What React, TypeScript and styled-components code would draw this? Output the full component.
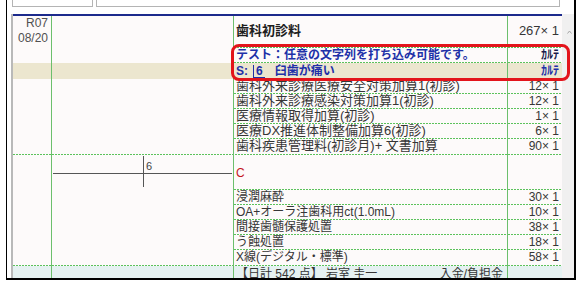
import React from 'react';
import styled, { createGlobalStyle, css } from 'styled-components';

const GREEN = '#6cbf6c';
const DOT = '#5cc25c';
const BLUE = '#2030a8';

const GlobalStyle = createGlobalStyle`
  body {
    margin: 0;
    background: #ffffff;
    font-family: "Liberation Sans", "Noto Sans CJK JP", sans-serif;
  }
`;

// green dotted rule along the bottom of a row / cell
const dots = css`
  background-image: repeating-linear-gradient(to right, ${DOT} 0 2px, transparent 2px 3px);
  background-size: 100% 1px;
  background-position: left bottom;
  background-repeat: no-repeat;
`;

const Page = styled.div`
  position: relative;
  width: 582px;
  height: 285px;
  overflow: hidden;
`;

const Frame = styled.div`
  margin-left: 6px;
  width: 570px;
  height: 280px;
  box-sizing: border-box;
  border-left: 1px solid #000;
  border-right: 2px solid #000;
  border-bottom: 2px solid #000;
  display: flex;
  flex-direction: column;
  overflow: hidden;
`;

const TopStrip = styled.div`
  height: 14px;
  display: flex;
  gap: 3px;
  padding-left: 5px;
  padding-right: 14px;
`;

const TopBox = styled.div<{ $w?: number }>`
  height: 7px;
  box-sizing: border-box;
  border: 1px solid #b4b4b4;
  border-top: none;
  background: #fff;
  ${(p) => (p.$w ? `width: ${p.$w}px;` : 'flex: 1;')}
`;

const Body = styled.div`
  flex: 1;
  display: flex;
  min-height: 0;
`;

const Gutter = styled.div`
  width: 6px;
  box-sizing: border-box;
  border-right: 2px solid #b9b9b9;
`;

const Main = styled.div`
  width: 549px;
  display: flex;
  flex-direction: column;
  background: #fdfafa;
  overflow: hidden;
`;

const NavyLine = styled.div`
  height: 2px;
  background: #1c2a8c;
  flex-shrink: 0;
`;

const Scroll = styled.div`
  width: 12px;
  background: #f0f0f0;
  padding: 6px 0 0 5px;
  box-sizing: border-box;
`;

const Row = styled.div<{ $h: number; $bg?: string; $full?: boolean }>`
  display: grid;
  grid-template-columns: 39px 182px 274px 54px;
  height: ${(p) => p.$h}px;
  flex-shrink: 0;
  background-color: ${(p) => p.$bg || 'transparent'};
  ${(p) => p.$full && dots}
`;

const Cell = styled.div`
  box-sizing: border-box;
  border-right: 1px solid ${GREEN};
`;

const DateCell = styled(Cell)`
  text-align: right;
  padding-right: 3px;
  font-size: 12px;
  line-height: 15px;
  color: #505050;
`;

const ToothCell = styled(Cell)`
  position: relative;
`;

const TextCell = styled(Cell)<{
  $line?: boolean;
  $color?: string;
  $bold?: boolean;
  $top?: number;
  $size?: number;
}>`
  padding-left: 2px;
  padding-top: ${(p) => p.$top || 0}px;
  font-size: ${(p) => p.$size || 12}px;
  line-height: 14px;
  white-space: nowrap;
  color: ${(p) => p.$color || '#363636'};
  font-weight: ${(p) => (p.$bold ? 700 : 400)};
  ${(p) => p.$line && dots}
`;

const QtyCell = styled.div<{ $line?: boolean; $color?: string; $bold?: boolean; $top?: number; $size?: number }>`
  box-sizing: border-box;
  text-align: right;
  padding-right: 3px;
  padding-top: ${(p) => p.$top || 0}px;
  font-size: ${(p) => p.$size || 12}px;
  line-height: 14px;
  white-space: nowrap;
  color: ${(p) => p.$color || '#363636'};
  font-weight: ${(p) => (p.$bold ? 700 : 400)};
  ${(p) => p.$line && dots}
`;

const HeadText = styled.span`
  font-size: 13px;
  font-weight: 700;
  color: #1e1e1e;
`;

const CMark = styled.div`
  height: 100%;
  display: flex;
  align-items: center;
  font-size: 12px;
  color: #c4161c;
`;

const ToothNo = styled.span`
  display: inline-block;
  border-left: 1px solid ${BLUE};
  border-bottom: 1px solid ${BLUE};
  line-height: 12px;
  padding: 0 2px;
  margin: 0 10px 0 5px;
`;

const TotalCell = styled(Cell)`
  overflow: hidden;
`;

const TotalLine = styled.div`
  display: flex;
  justify-content: space-between;
  padding: 1px 4px 0 2px;
  font-size: 12px;
  line-height: 14px;
  color: #363636;
  white-space: nowrap;
`;

const Highlight = styled.div`
  position: absolute;
  left: 231px;
  top: 44px;
  width: 339px;
  height: 37px;
  box-sizing: border-box;
  border: 3px solid #e3141b;
  border-radius: 8px;
  pointer-events: none;
`;

type Item = { name: string; qty: string };

const firstItems: Item[] = [
  { name: '歯科外来診療医療安全対策加算1(初診)', qty: '12× 1' },
  { name: '歯科外来診療感染対策加算1(初診)', qty: '12× 1' },
  { name: '医療情報取得加算(初診)', qty: '1× 1' },
  { name: '医療DX推進体制整備加算6(初診)', qty: '6× 1' },
  { name: '歯科疾患管理料(初診月)+ 文書加算', qty: '90× 1' },
];

const secondItems: Item[] = [
  { name: '浸潤麻酔', qty: '30× 1' },
  { name: 'OA+オーラ注歯科用ct(1.0mL)', qty: '10× 1' },
  { name: '間接歯髄保護処置', qty: '38× 1' },
  { name: 'う蝕処置', qty: '18× 1' },
  { name: 'X線(デジタル・標準)', qty: '58× 1' },
];

// the last row of a block draws its dotted rule across every column
const ItemRows: React.FC<{ items: Item[]; size?: number }> = ({ items, size }) => (
  <>
    {items.map((it, i) => {
      const last = i === items.length - 1;
      return (
        <Row key={it.name} $h={last ? 16 : 15} $full={last}>
          <DateCell />
          <ToothCell />
          <TextCell $line={!last} $size={size}>
            {it.name}
          </TextCell>
          <QtyCell $line={!last}>{it.qty}</QtyCell>
        </Row>
      );
    })}
  </>
);

const ToothChart = () => (
  <svg width="181" height="34" style={{ position: 'absolute', left: 0, top: 0 }}>
    <line x1="1" y1="18.5" x2="180" y2="18.5" stroke="#555" strokeWidth="1" />
    <line x1="91.5" y1="1" x2="91.5" y2="32" stroke="#555" strokeWidth="1" />
    <text x="94" y="15" fontSize="11" fontFamily="Liberation Sans, sans-serif" fill="#444">
      6
    </text>
  </svg>
);

const App: React.FC = () => {
  return (
    <Page>
      <GlobalStyle />
      <Frame>
        <TopStrip>
          <TopBox $w={81} />
          <TopBox />
        </TopStrip>
        <Body>
          <Gutter />
          <Main>
            <NavyLine />

            <Row $h={32}>
              <DateCell>
                R07
                <br />
                08/20
              </DateCell>
              <ToothCell />
              <TextCell $line $top={8}>
                <HeadText>歯科初診料</HeadText>
              </TextCell>
              <QtyCell $line $top={8} $size={13}>
                267× 1
              </QtyCell>
            </Row>

            <Row $h={15}>
              <DateCell />
              <ToothCell />
              <TextCell $line $bold $color={BLUE}>
                テスト：任意の文字列を打ち込み可能です。
              </TextCell>
              <QtyCell $line $bold $color="#1a1a4a">
                ｶﾙﾃ
              </QtyCell>
            </Row>

            <Row $h={16} $bg="#ece6cf">
              <DateCell />
              <ToothCell />
              <TextCell $line $bold $color={BLUE} $top={1}>
                S:<ToothNo>6</ToothNo>臼歯が痛い
              </TextCell>
              <QtyCell $line $bold $color={BLUE} $top={1}>
                ｶﾙﾃ
              </QtyCell>
            </Row>

            <ItemRows items={firstItems} size={13} />

            <Row $h={35}>
              <DateCell />
              <ToothCell>
                <ToothChart />
              </ToothCell>
              <TextCell $line>
                <CMark>C</CMark>
              </TextCell>
              <QtyCell $line />
            </Row>

            <ItemRows items={secondItems} />

            <Row $h={16} $bg="#e5f1f1">
              <DateCell />
              <ToothCell />
              <TotalCell>
                <TotalLine>
                  <span>【日計 542 点】 岩室 圭一</span>
                  <span>入金/負担金</span>
                </TotalLine>
              </TotalCell>
              <div />
            </Row>
          </Main>
          <Scroll>
            <svg width="5" height="4" viewBox="0 0 5 4">
              <path d="M0.5 3.5 L2.5 1 L4.5 3.5" fill="none" stroke="#a6a6a6" strokeWidth="1" />
            </svg>
          </Scroll>
        </Body>
      </Frame>
      <Highlight />
    </Page>
  );
};

export default App;
